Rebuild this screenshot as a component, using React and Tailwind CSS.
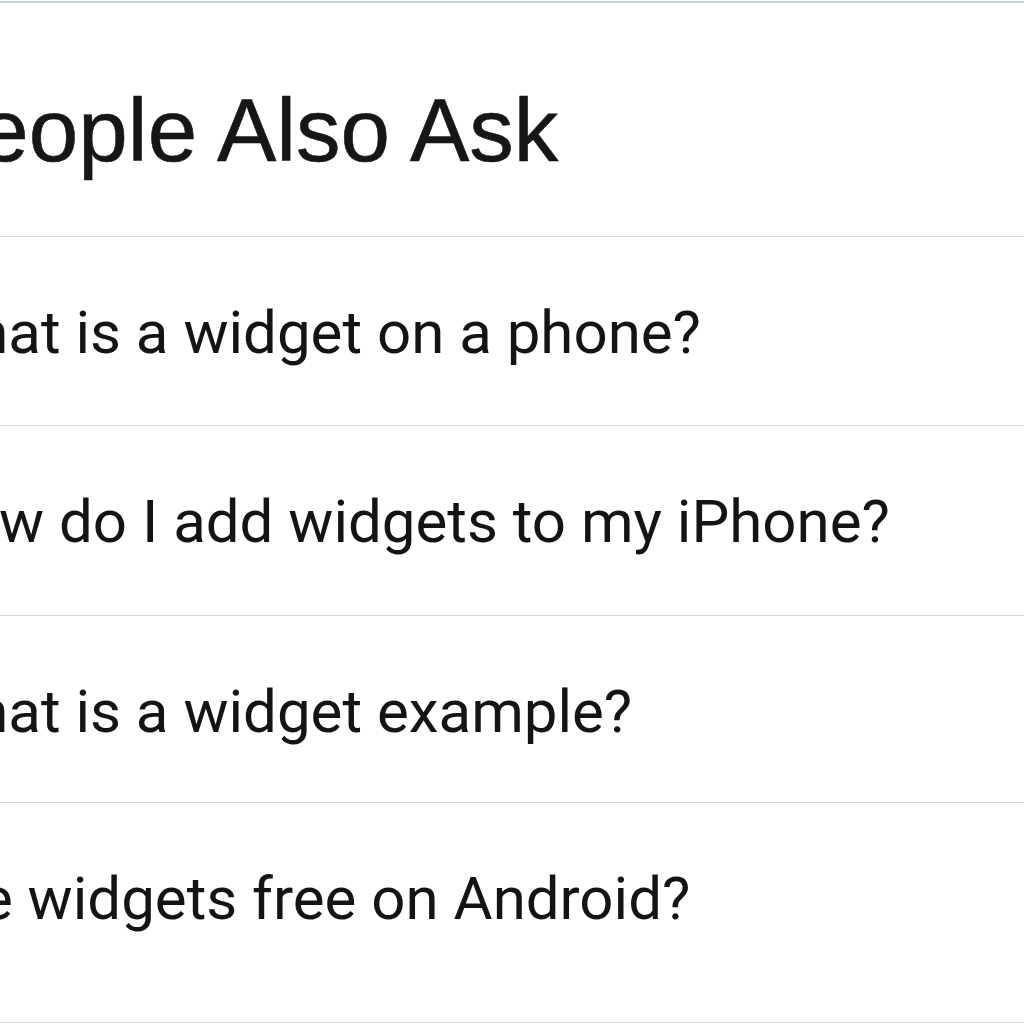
const questions = [
  { text: 'What is a widget on a phone?', h: 'h-[189px]' },
  { text: 'How do I add widgets to my iPhone?', h: 'h-[190px]' },
  { text: 'What is a widget example?', h: 'h-[187px]' },
  { text: 'Are widgets free on Android?', h: 'h-[220px]' }
]

export default function App() {
  return (
    <div className="w-[1024px] h-[1024px] overflow-hidden bg-white">
      <div className="mt-px border-t-2 border-[#c9d3dc]">

        {/* Heading */}
        <div className="h-[234px] pt-[83px] border-b border-[#d3dce3]">
          <h2 className="-ml-[80px] whitespace-nowrap leading-none text-[89px] text-[#161616] [-webkit-text-stroke:0.6px_#161616] font-['Liberation_Sans',Arial,sans-serif]">
            People Also Ask
          </h2>
        </div>

        {/* Questions */}
        {questions.map(q => (
          <div key={q.text} className={`${q.h} pt-[66px] border-b border-[#d3dce3]`}>
            <p className="-ml-[78px] whitespace-nowrap leading-none text-[60px] text-[#141414] font-['Roboto',sans-serif]">
              {q.text}
            </p>
          </div>
        ))}

      </div>
    </div>
  )
}
